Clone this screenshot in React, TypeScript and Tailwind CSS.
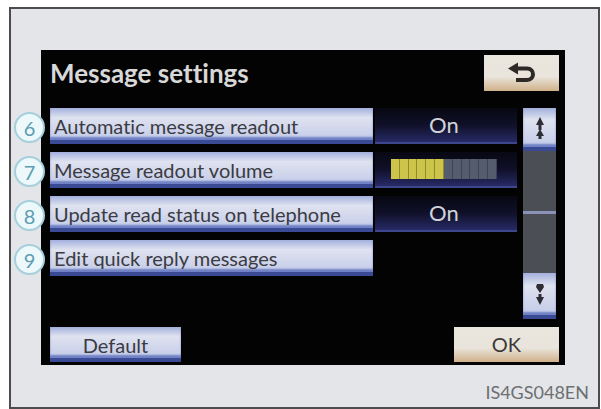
import React from 'react';

type Setting = {
  step: number;
  label: string;
  value?: string;
  level?: number;
};

const settings: Setting[] = [
  { step: 6, label: 'Automatic message readout', value: 'On' },
  { step: 7, label: 'Message readout volume', level: 6 },
  { step: 8, label: 'Update read status on telephone', value: 'On' },
  { step: 9, label: 'Edit quick reply messages' },
];

const LEVELS = 12;

const blueKey =
  'bg-linear-to-b from-[#a3b0dc] via-[#dfe2ef] via-30% to-[#c3cbe8] border-b-4 border-[#3b4a94] text-[#3b3b42] shadow-[inset_0_-3px_2px_#6f80c4]';
const creamKey =
  'bg-linear-to-b from-[#e9e6de] via-[#e9e4dc] via-60% to-[#cfb189] text-[#3b3835]';

const VolumeMeter: React.FC<{ level: number }> = ({ level }) => (
  <div
    role="meter"
    aria-label="Message readout volume"
    aria-valuemin={0}
    aria-valuemax={LEVELS}
    aria-valuenow={level}
    className="flex h-5 w-[106px]"
  >
    {Array.from({ length: LEVELS }, (_, i) => (
      <span
        key={i}
        className={`flex-1 border-r ${
          i < level ? 'bg-[#cdc54a] border-[#8f8a36]' : 'bg-[#555c6c] border-[#3d4358]'
        }`}
      />
    ))}
  </div>
);

const SettingRow: React.FC<{ setting: Setting }> = ({ setting }) => {
  const { step, label, value, level } = setting;
  const hasValue = value !== undefined || level !== undefined;

  return (
    <li className="relative flex h-9 gap-0.5">
      {/* Callout number, hangs over the left edge of the screen */}
      <span className="absolute top-1 -left-9 flex size-[31px] items-center justify-center rounded-full border-2 border-[#a5cfdc] bg-[#edf8fb] text-[20px] leading-none text-[#5b9db2]">
        {step}
      </span>
      <button type="button" className={`min-w-0 flex-[323] truncate pt-1 pl-1 text-left text-[20px] leading-[28px] ${blueKey}`}>
        {label}
      </button>
      <div className="flex flex-[144]">
        {hasValue && (
          <div className="flex flex-1 items-center justify-center border-b-2 border-[#3d478b] bg-linear-to-b from-[#080812] via-[#10102a] via-50% to-[#272a66] pr-1 text-[22px] leading-none text-[#d3d3d8]">
            {value ?? <VolumeMeter level={level ?? 0} />}
          </div>
        )}
      </div>
    </li>
  );
};

const ScrollBar: React.FC = () => (
  <div className="mr-[3px] flex w-[33px] flex-col">
    <button type="button" aria-label="Page up" className={`flex h-[43px] items-center justify-center ${blueKey}`}>
      <svg width="12" height="26" viewBox="0 0 12 26" fill="#2d2d33">
        <path d="M6 2 L10 10 H7.500 V15 H4.500 V10 H2 Z" />
        <path d="M6 14 L10 21 H7.500 V24 H4.500 V21 H2 Z" />
      </svg>
    </button>
    <div className="flex flex-1 flex-col justify-center bg-[#4b4e54]">
      <div className="h-[3px] bg-[#8a92b8]" />
    </div>
    <button type="button" aria-label="Page down" className={`flex h-[46px] items-center justify-center ${blueKey}`}>
      <svg width="12" height="26" viewBox="0 0 12 26" fill="#2d2d33">
        <path d="M3 3 H9 L10 6 L6 12 L2 6 Z" />
        <path d="M4.500 13 H7.500 V16 H10 L6 24 L2 16 H4.500 Z" />
      </svg>
    </button>
  </div>
);

const App: React.FC = () => {
  return (
    <div className="bg-white pt-[7px] pr-px pb-px pl-[9px] font-['Lato','Liberation_Sans',sans-serif] [font-variant-ligatures:none]">
      <main className="border-2 border-[#4c4c4e] bg-[#e3e5e8] pt-[41px] pr-[33px] pl-[30px]">
        <section className="bg-[#040303] pt-[5px] pr-[6px] pb-[3px] pl-[9px]">
          <header className="flex items-start justify-between">
            <h1 className="text-[26px] leading-[36px] font-bold text-[#d8d8d8]">Message settings</h1>
            <button type="button" aria-label="Back" className={`flex h-9 w-[75px] items-center justify-center ${creamKey}`}>
              <svg width="32" height="24" viewBox="0 0 32 24" fill="none">
                <path d="M9 7.500 H21 C29 7.500 29 19 21 19 H10" stroke="#2c2926" strokeWidth="4" />
                <path d="M2 7.500 L12 1.500 V13.500 Z" fill="#2c2926" />
              </svg>
            </button>
          </header>

          <div className="mt-[17px] flex gap-[6px]">
            <ul className="flex min-w-0 flex-1 flex-col gap-2">
              {settings.map((setting) => (
                <SettingRow key={setting.step} setting={setting} />
              ))}
            </ul>
            <div className="-mb-[43px] flex">
              <ScrollBar />
            </div>
          </div>

          <footer className="mt-[51px] flex justify-between">
            <button type="button" className={`h-[35px] w-[131px] pt-1 text-[20px] leading-[28px] ${blueKey}`}>
              Default
            </button>
            <button type="button" className={`h-[35px] w-[105px] text-[20px] leading-[35px] ${creamKey}`}>
              OK
            </button>
          </footer>
        </section>
        <p className="-mr-[24px] pt-4 pb-1 text-right text-[18px] leading-[22px] text-[#6d6f72]">IS4GS048EN</p>
      </main>
    </div>
  );
};

export default App;
